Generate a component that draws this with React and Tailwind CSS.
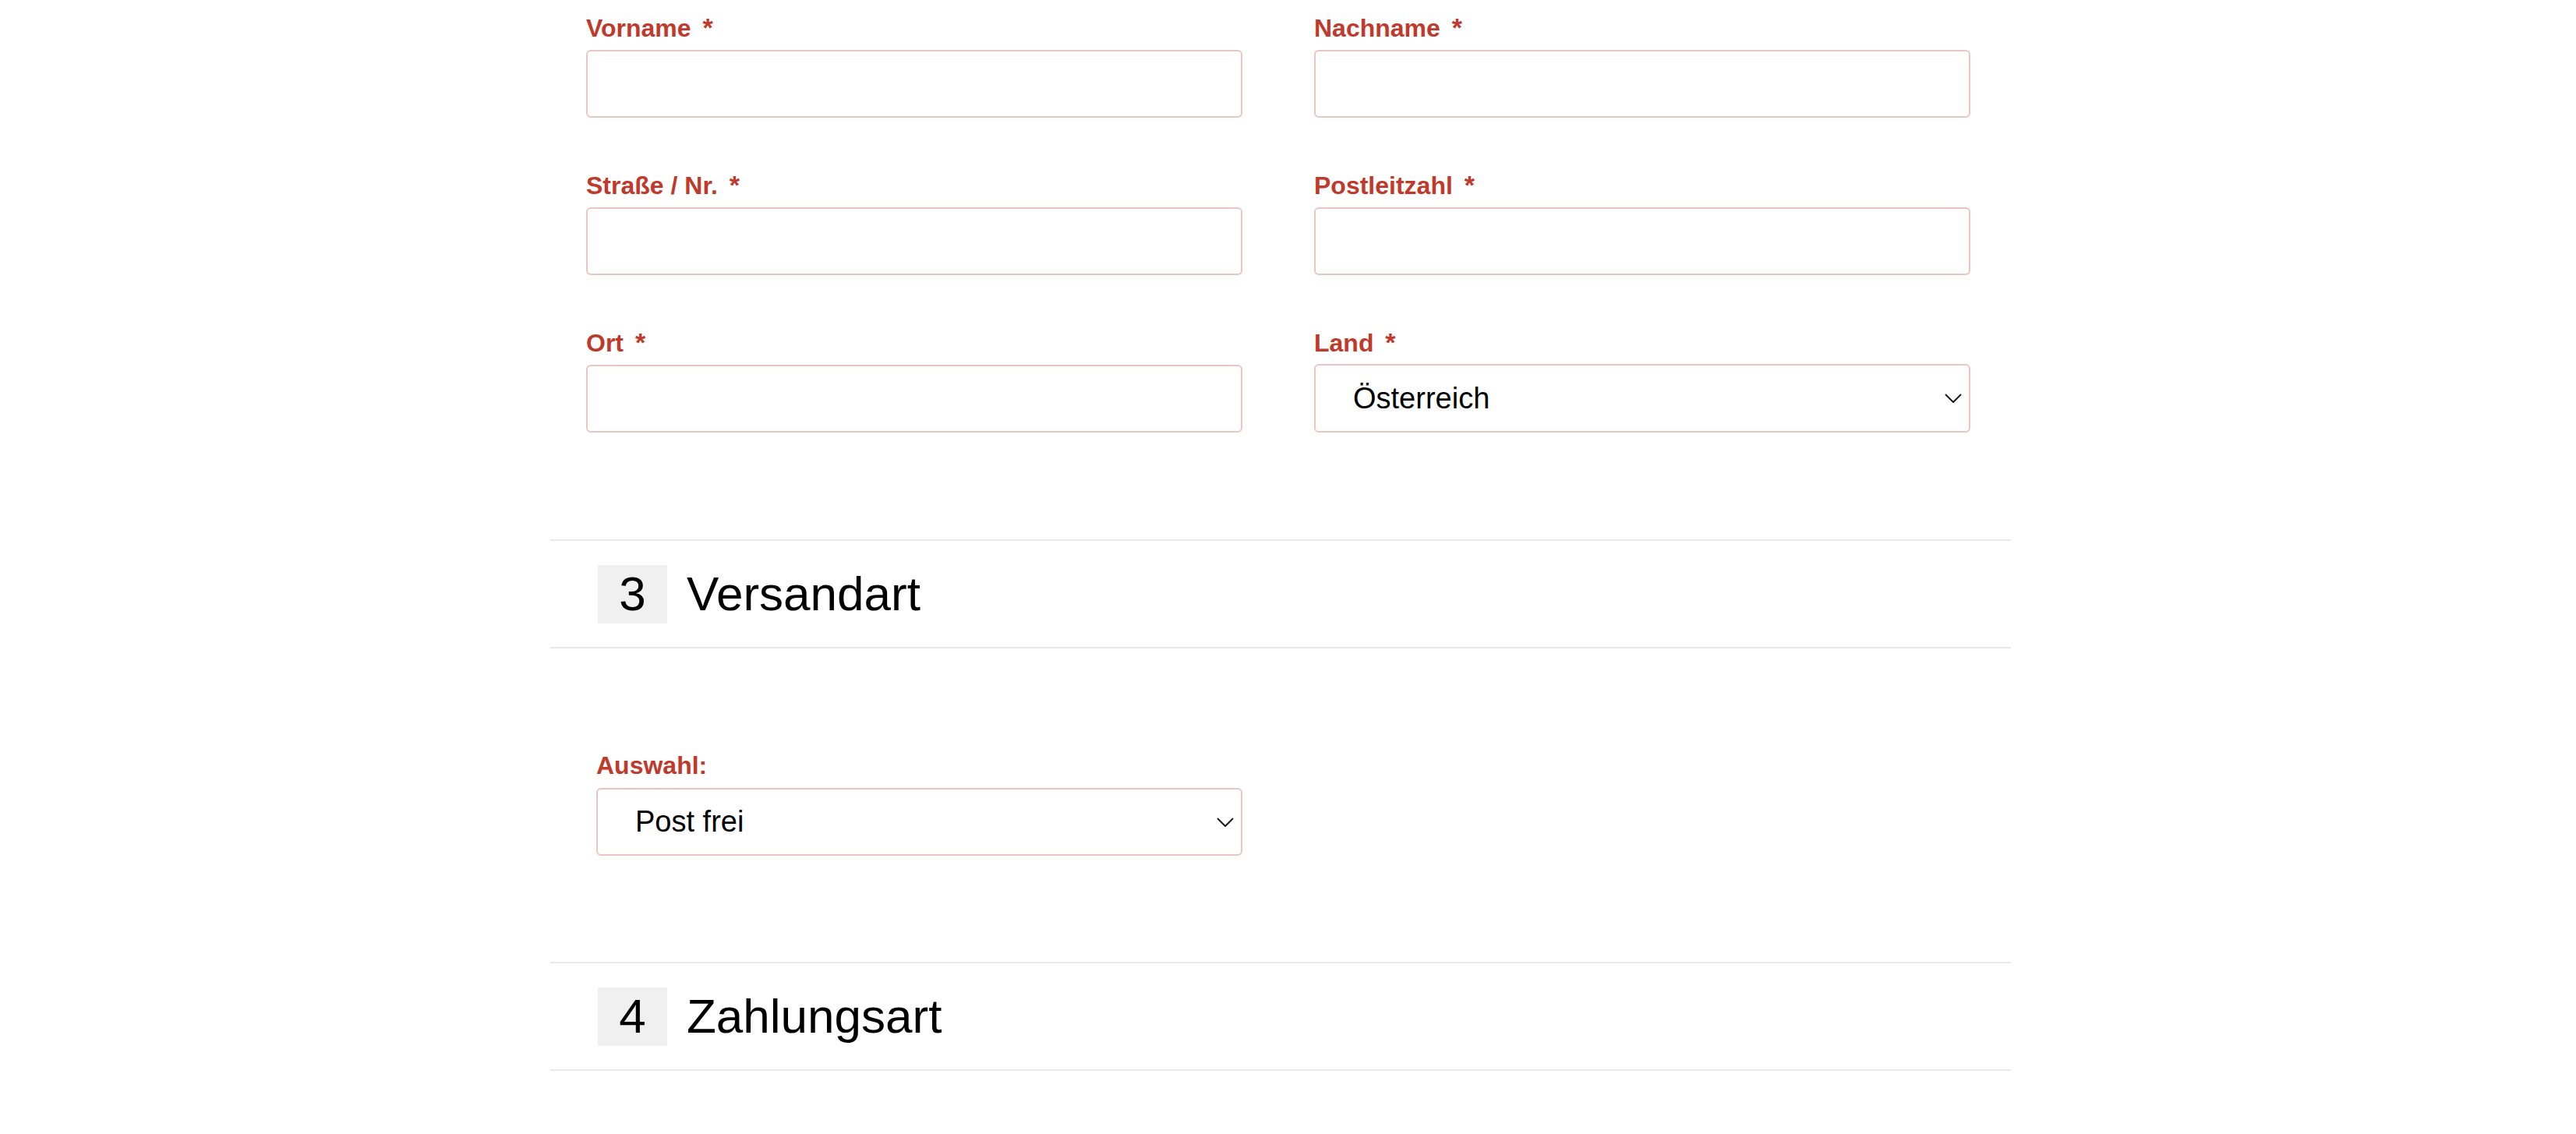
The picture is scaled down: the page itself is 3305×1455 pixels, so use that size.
import React from 'react';

const RED = 'text-[#c0392b]';

const Chevron = () => (
  <svg
    className="pointer-events-none absolute right-[11px] top-1/2 -translate-y-1/2"
    width="22"
    height="12"
    viewBox="0 0 22 12"
    fill="none"
  >
    <path d="M1 1l10 10L21 1" stroke="#1a1a1a" strokeWidth="2" />
  </svg>
);

const FieldLabel = ({ children, required, className = 'mb-[10px]' }) => (
  <label className={`block h-[37px] text-[32px] leading-[37px] font-bold ${RED} ${className}`}>
    {children}
    {required && (
      <>
        {' '}
        <span className="ml-[6px] text-[34px]">*</span>
      </>
    )}
  </label>
);

const TextField = ({ label }) => (
  <div>
    <FieldLabel required>{label}</FieldLabel>
    <input
      type="text"
      className="block h-[87px] w-full rounded-[6px] border-2 border-[#ebc5c2] bg-white px-[48px] text-[38px] outline-none"
    />
  </div>
);

const SelectField = ({ label, required, value, options, height = 'h-[87px]', labelGap = 'mb-[10px]' }) => (
  <div>
    <FieldLabel required={required} className={labelGap}>
      {label}
    </FieldLabel>
    <div className="relative">
      <select
        defaultValue={value}
        className={`block ${height} w-full appearance-none rounded-[6px] border-2 border-[#ebc5c2] bg-white pl-[48px] pr-[50px] text-[38px] text-black outline-none`}
      >
        {options.map((o) => (
          <option key={o}>{o}</option>
        ))}
      </select>
      <Chevron />
    </div>
  </div>
);

const StepHeader = ({ n, title }) => (
  <div className="box-border flex h-[140px] items-center border-y-2 border-[#e8e8e8] pl-[61px]">
    <div className="flex h-[75px] w-[89px] items-center justify-center bg-[#f0f0f0] text-[62px] leading-none text-black">
      {n}
    </div>
    <div className="ml-[25px] text-[62px] leading-none text-black">{title}</div>
  </div>
);

export default function App() {
  return (
    <div className="min-h-screen bg-white font-['Liberation_Sans',Arial,sans-serif]">
      <div className="ml-[706px] w-[1874px]">
        {/* Adresse */}
        <div className="pl-[46px] pr-[52px] pt-[17px]">
          <div className="grid grid-cols-2 items-start gap-x-[92px] gap-y-[68px]">
            <TextField label="Vorname" />
            <TextField label="Nachname" />
            <TextField label="Straße / Nr." />
            <TextField label="Postleitzahl" />
            <TextField label="Ort" />
            <SelectField
              label="Land"
              required
              value="Österreich"
              height="h-[88px]"
              labelGap="mb-[9px]"
              options={['Österreich', 'Deutschland', 'Schweiz', 'Italien']}
            />
          </div>
        </div>

        <div className="mt-[137px]">
          <StepHeader n="3" title="Versandart" />
        </div>

        <div className="w-[888px] pl-[59px] pt-[132px] pb-[136px]">
          <SelectField
            label="Auswahl:"
            value="Post frei"
            labelGap="mb-[10px]"
            options={['Post frei', 'Post Express', 'Abholung']}
          />
        </div>

        <StepHeader n="4" title="Zahlungsart" />
      </div>
    </div>
  );
}
